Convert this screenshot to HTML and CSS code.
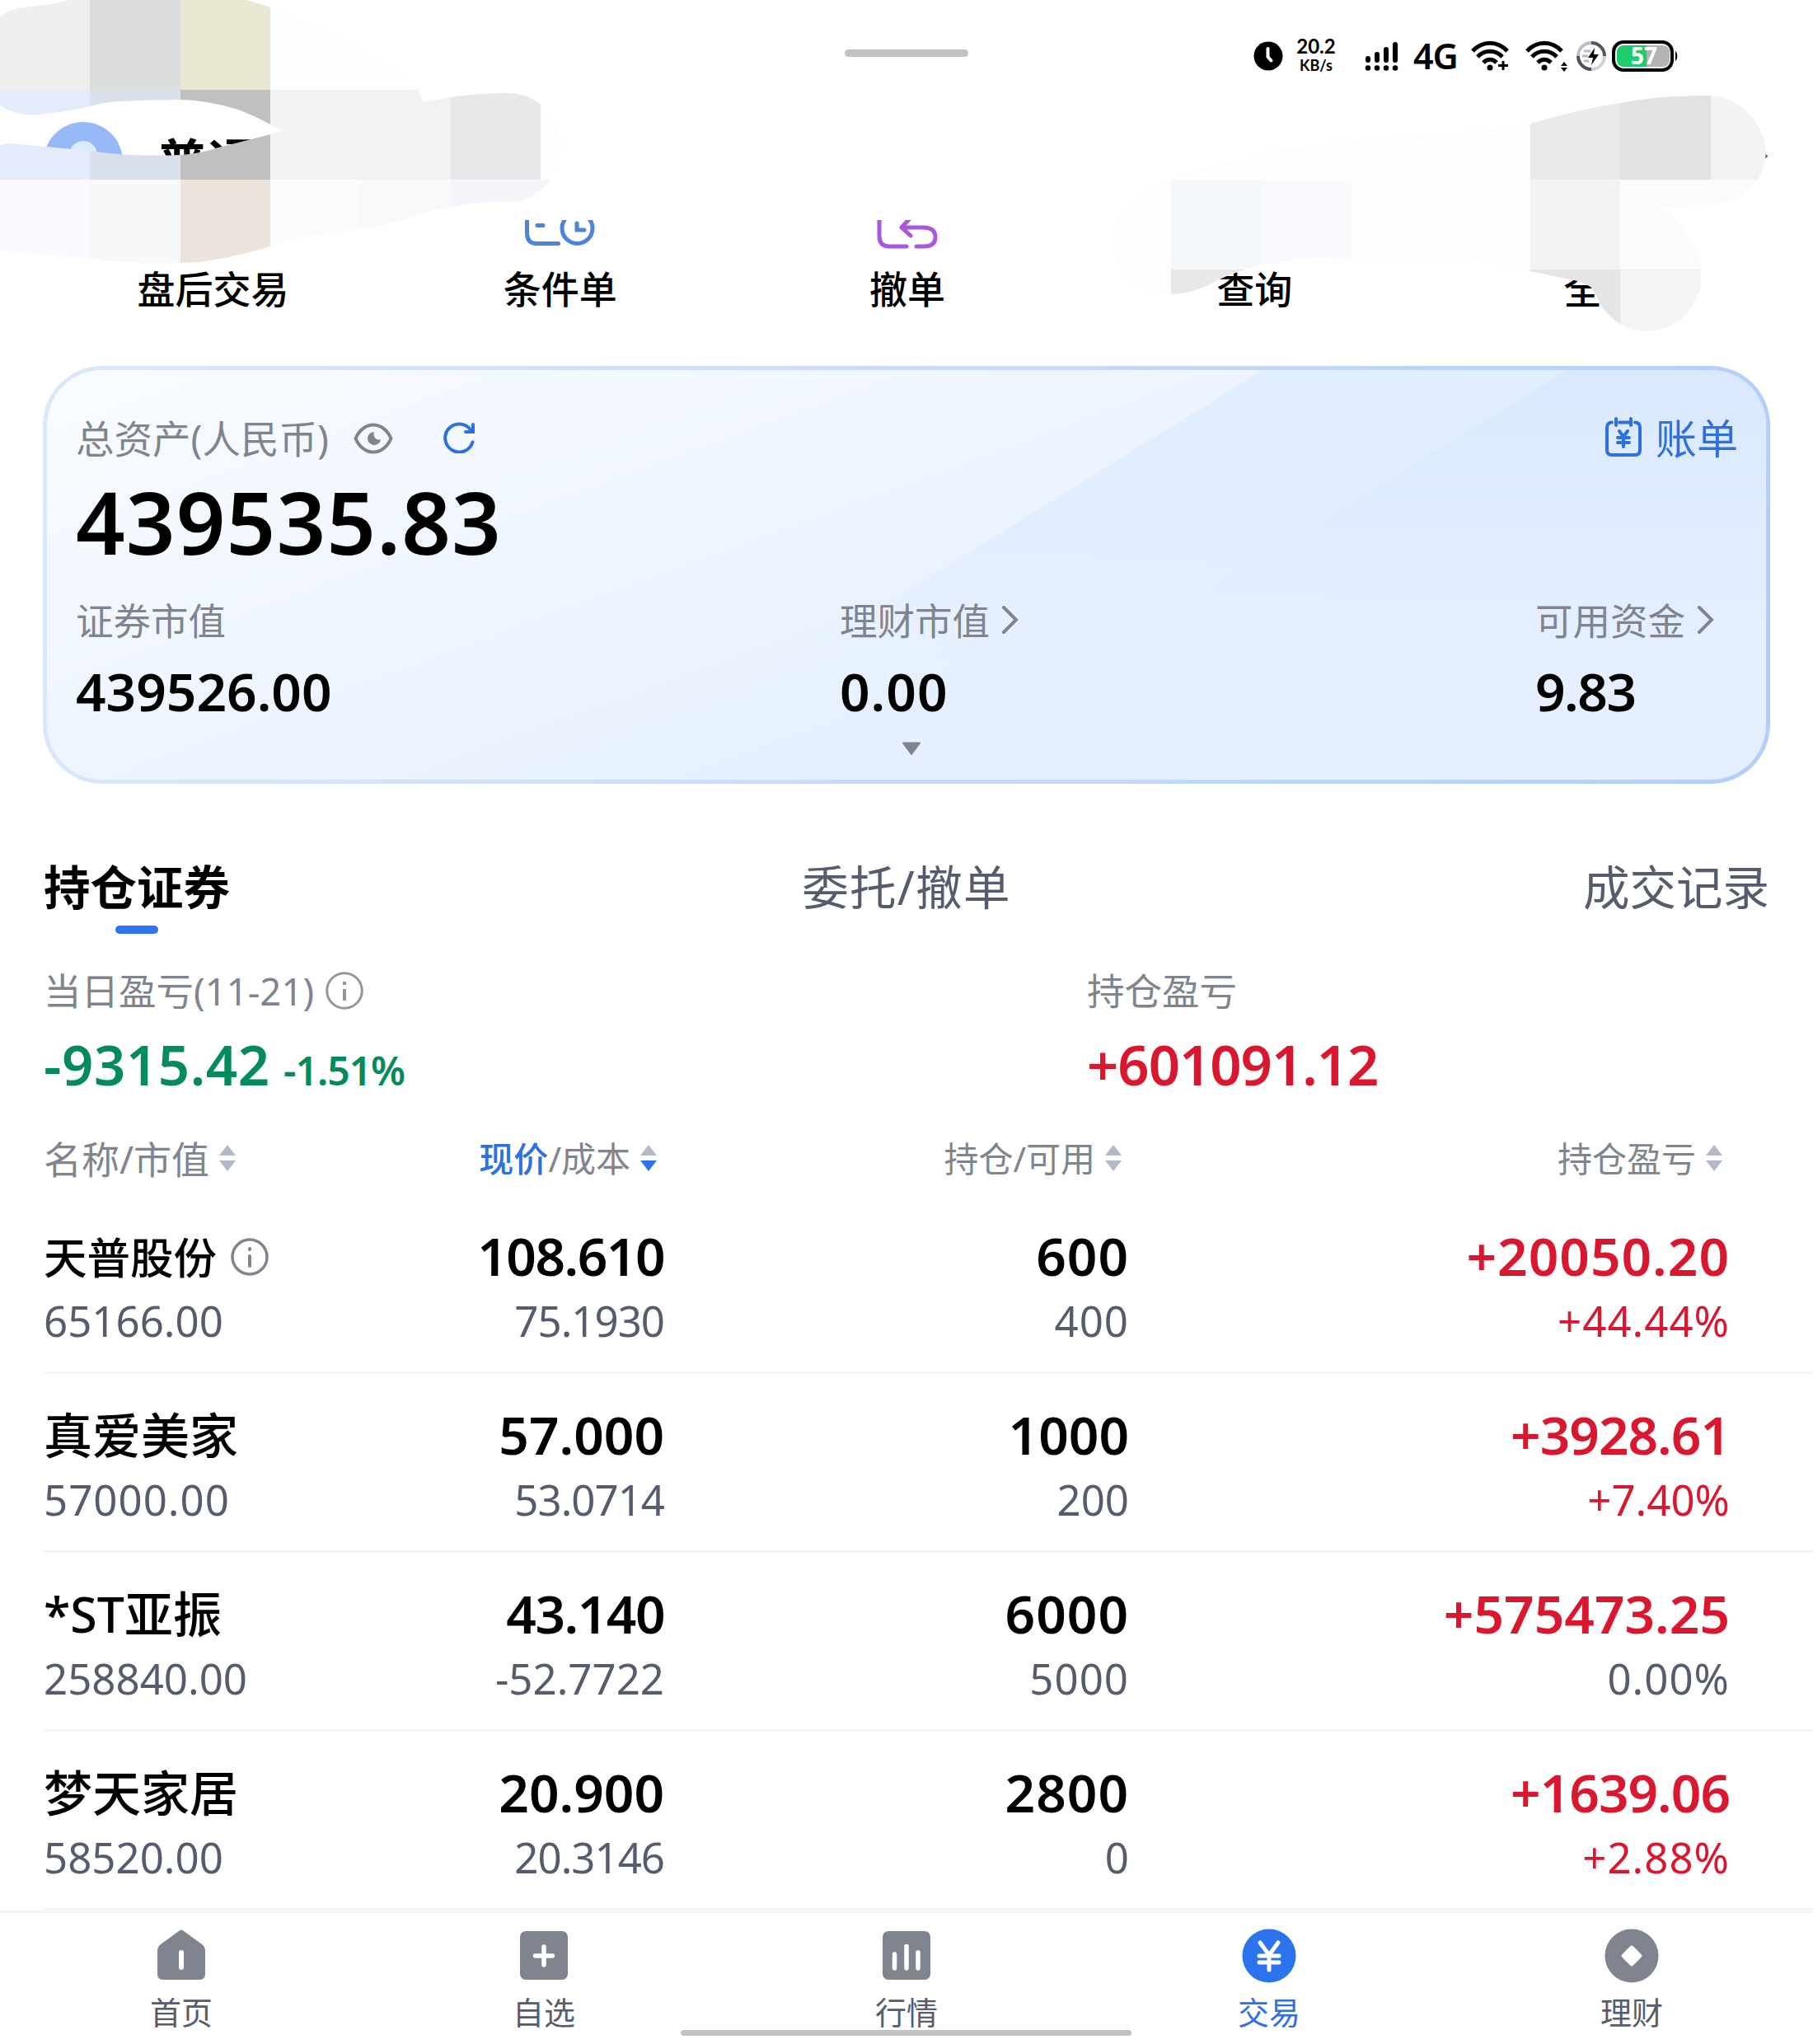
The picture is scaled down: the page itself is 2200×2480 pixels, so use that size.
FILE: index.html
```html
<!DOCTYPE html>
<html lang="zh-CN">
<head>
    <meta charset="UTF-8">
    <title>交易</title>
    <link rel="stylesheet" href="styles.css">
</head>
<body>

<div class="screen">
    <div class="status">
        <svg class="status-clock" width="36" height="36" viewBox="0 0 36 36"><circle cx="18" cy="18" r="17.5"/><path d="M17.5 9v10l4 4.5" fill="none" stroke="#fff" stroke-width="4" stroke-linecap="round" stroke-linejoin="round"/></svg>
        <div class="speed"><span>20.2</span><span class="unit">KB/s</span></div>
        <svg class="status-signal" width="42" height="36" viewBox="0 0 42 36">
            <path d="M4 21v2M15 16v7M26 10v13M37 4v19" stroke="#000" stroke-width="6" stroke-linecap="round"/>
            <path d="M4 32.500h.01M15 32.500h.01M26 32.500h.01M37 32.500h.01" stroke="#000" stroke-width="6.500" stroke-linecap="round"/>
        </svg>
        <span class="net">4G</span>
        <svg class="status-wifi" width="48" height="38" viewBox="0 0 48 38">
            <path d="M3 13c12-13 30-13 42 0M9 20c8-9 22-9 30 0M16 27c5-5 11-5 16 0" fill="none" stroke="#000" stroke-width="5"/>
            <circle cx="24" cy="33" r="3.500"/><path d="M34 30.500h12M40 25v11" stroke="#000" stroke-width="3"/>
        </svg>
        <svg class="status-wifi2" width="52" height="38" viewBox="0 0 52 38">
            <path d="M3 13c12-13 30-13 42 0M9 20c8-9 22-9 30 0M16 27c5-5 11-5 16 0" fill="none" stroke="#000" stroke-width="5"/>
            <circle cx="24" cy="33" r="3.500"/><path d="M44 31l4-5 4 5zM44 33l4 5 4-5z"/>
        </svg>
        <svg class="status-charge" width="38" height="38" viewBox="0 0 38 38">
            <path d="M19 3a16 16 0 0 0-16 16" fill="none" stroke="#b9bdc8" stroke-width="4"/>
            <path d="M3 19a16 16 0 0 0 16 16" fill="none" stroke="#4a5060" stroke-width="4"/>
            <path d="M19 35a16 16 0 0 0 16-16" fill="none" stroke="#d2d2d4" stroke-width="4"/>
            <path d="M35 19A16 16 0 0 0 19 3" fill="none" stroke="#555" stroke-width="4"/>
            <path d="M10 13h8M8 19h7M10 25h6" stroke="#bbb" stroke-width="3"/>
            <path d="M23 9l-8 12h6l-2 9 9-13h-6z"/>
        </svg>
        <svg class="status-battery" width="80" height="38" viewBox="0 0 80 38">
            <rect x="2" y="2" width="71" height="34" rx="12" fill="#fff" stroke="#000" stroke-width="4"/>
            <path d="M42 6h20a8 8 0 0 1 8 8v10a8 8 0 0 1-8 8H42z" fill="#b3b3b3"/>
            <path d="M42 6H14a8 8 0 0 0-8 8v10a8 8 0 0 0 8 8h28z" fill="#20cb6b"/>
            <path d="M77 13c3 2 3 10 0 12z"/>
            <text x="39" y="29" text-anchor="middle" class="battery-text">57</text>
        </svg>
    </div>
    <div class="handle"></div>

    <div class="account">
        <svg width="96" height="96" viewBox="0 0 96 96"><circle cx="48" cy="48" r="48" fill="#98b9f7"/><circle cx="48" cy="40" r="17" fill="#dce9fe"/></svg>
        <span>普通</span>
        <svg class="account-arrow" width="40" height="24" viewBox="0 0 40 24"><path d="M4 4l16 15L36 4" fill="none" stroke="#565c6e" stroke-width="4"/></svg>
    </div>

    <div class="actions">
        <div class="action"><div class="action-icon"></div>盘后交易</div>
        <div class="action">
            <div class="action-icon">
                <svg width="90" height="35" viewBox="0 0 90 35" fill="none" stroke="#4c84da" stroke-width="5" stroke-linecap="round">
                    <path d="M4.500-5v21q0 12.500 12 12.500h26M17 6.500h7M65 4v8h9"/><circle cx="65.500" cy="10" r="18.500"/>
                </svg>
            </div>条件单
        </div>
        <div class="action">
            <div class="action-icon">
                <svg width="90" height="35" viewBox="0 0 90 35" fill="none" stroke="#a958dc" stroke-width="5" stroke-linecap="round" stroke-linejoin="round">
                    <path d="M11-5v24q0 13 12 13h21M49-3L38 9l11 10M38 9h26q15 0 15 11.500T65 32H56"/>
                </svg>
            </div>撤单
        </div>
        <div class="action"><div class="action-icon"></div>查询</div>
        <div class="action"><div class="action-icon"></div>全部</div>
    </div>

    <div class="card">
        <svg class="card-shine" width="2086" height="497" viewBox="0 0 2086 497" preserveAspectRatio="none">
            <defs>
                <linearGradient id="shine1" x1="0" y1="0" x2="0" y2="1"><stop offset="0" stop-color="#e1eeff"/><stop offset=".5" stop-color="#e1eeff"/><stop offset="1" stop-color="#e4eeff" stop-opacity="0"/></linearGradient>
                <linearGradient id="shine2" x1="0" y1="0" x2="0" y2="1"><stop offset="0" stop-color="#d9e8ff"/><stop offset="1" stop-color="#e3eeff" stop-opacity="0"/></linearGradient>
            </defs>
            <path d="M1475 0L860 382H2086V0z" fill="url(#shine1)"/>
            <path d="M1846 0L1250 362H2086V0z" fill="url(#shine2)"/>
        </svg>
        <div class="card-top">
            <span class="card-title">总资产(人民币)</span>
            <svg class="eye" width="48" height="38" viewBox="0 0 48 38"><path d="M2.500 19C12-3 36-3 45.500 19 36 41 12 41 2.500 19z" fill="none" stroke="#80848f" stroke-width="4"/><path d="M25 11a8 8 0 1 0 8 9c-5 2-10-3-8-9z" fill="#80848f"/></svg>
            <svg width="38" height="38" viewBox="0 0 38 38" fill="none" stroke="#2f70e0" stroke-width="4" stroke-linecap="round"><path d="M35.500 24.500A17 17 0 1 1 33 9.500M36 3v9h-9"/></svg>
            <a class="bill">
                <svg width="46" height="50" viewBox="0 0 46 50" fill="none" stroke="#2f70e0" stroke-width="4" stroke-linecap="round"><path d="M18 7.500h12M9 7.500h0Q3 7.500 3 14v27q0 6 6 6h28q6 0 6-6V14q0-6.500-6-6.500M14 3v8M32 3v8M18 18l5 7 5-7M16 26h14M16 32h14M23 25v12"/></svg>
                <span>账单</span>
            </a>
        </div>
        <div class="total">439535.83</div>
        <div class="card-cols">
            <div>
                <div class="card-label">证券市值</div>
                <div class="card-value">439526.00</div>
            </div>
            <div>
                <div class="card-label">理财市值<svg width="22" height="38" viewBox="0 0 22 38"><path d="M3 4l15 15L3 34"/></svg></div>
                <div class="card-value wide">0.00</div>
            </div>
            <div>
                <div class="card-label">可用资金<svg width="22" height="38" viewBox="0 0 22 38"><path d="M3 4l15 15L3 34"/></svg></div>
                <div class="card-value ones">9.83</div>
            </div>
        </div>
        <svg class="expand" width="24" height="17" viewBox="0 0 24 17"><path d="M2 1.500h20L12 15z" fill="#80848f" stroke="#80848f" stroke-width="2" stroke-linejoin="round"/></svg>
    </div>

    <div class="tabs">
        <div class="tab active">持仓证券</div>
        <div class="tab orders">委托/撤单</div>
        <div class="tab">成交记录</div>
    </div>

    <div class="profit">
        <div>
            <div class="profit-label">当日盈亏(11-21)<svg width="46" height="46" viewBox="0 0 46 46"><circle cx="23" cy="23" r="21.300" fill="none" stroke="#949698" stroke-width="3"/><path d="M23 12v4M23 21v14" stroke="#949698" stroke-width="4"/></svg></div>
            <div class="profit-value green"><span class="day">-9315.42</span> <small>-1.51%</small></div>
        </div>
        <div>
            <div class="profit-label">持仓盈亏</div>
            <div class="profit-value red">+601091.12</div>
        </div>
    </div>

    <div class="row head">
        <div class="first">名称/市值<svg class="sort" width="22" height="34" viewBox="0 0 22 34"><path d="M11 1l10 13H1z"/><path d="M11 33L1 20h20z"/></svg></div>
        <div><b>现价</b>/成本<svg class="sort" width="22" height="34" viewBox="0 0 22 34"><path d="M11 1l10 13H1z"/><path class="on" d="M11 33L1 20h20z"/></svg></div>
        <div>持仓/可用<svg class="sort" width="22" height="34" viewBox="0 0 22 34"><path d="M11 1l10 13H1z"/><path d="M11 33L1 20h20z"/></svg></div>
        <div>持仓盈亏<svg class="sort" width="22" height="34" viewBox="0 0 22 34"><path d="M11 1l10 13H1z"/><path d="M11 33L1 20h20z"/></svg></div>
    </div>

    <div class="row">
        <div class="name"><p class="small-name">天普股份<svg width="46" height="46" viewBox="0 0 46 46"><circle cx="23" cy="23" r="21" fill="none" stroke="#80848f" stroke-width="3.500"/><path d="M23 13v1M23 22v12" stroke="#80848f" stroke-width="4" stroke-linecap="round"/></svg></p><p class="sub">65166.00</p></div>
        <div><p class="num ones">108.610</p><p class="sub tight">75.1930</p></div>
        <div><p class="num wide">600</p><p class="sub wide">400</p></div>
        <div class="red"><p class="num wide">+20050.20</p><p class="sub wide">+44.44%</p></div>
    </div>
    <div class="row">
        <div class="name"><p>真爱美家</p><p class="sub wide">57000.00</p></div>
        <div><p class="num">57.000</p><p class="sub tight">53.0714</p></div>
        <div><p class="num">1000</p><p class="sub">200</p></div>
        <div class="red"><p class="num tight">+3928.61</p><p class="sub">+7.40%</p></div>
    </div>
    <div class="row">
        <div class="name"><p>*ST亚振</p><p class="sub">258840.00</p></div>
        <div><p class="num ones">43.140</p><p class="sub">-52.7722</p></div>
        <div><p class="num wide">6000</p><p class="sub wide">5000</p></div>
        <div class="red"><p class="num">+575473.25</p><p class="sub wide flat">0.00%</p></div>
    </div>
    <div class="row">
        <div class="name"><p>梦天家居</p><p class="sub">58520.00</p></div>
        <div><p class="num">20.900</p><p class="sub tight">20.3146</p></div>
        <div><p class="num wide">2800</p><p class="sub">0</p></div>
        <div class="red"><p class="num tight">+1639.06</p><p class="sub wide">+2.88%</p></div>
    </div>

    <div class="nav">
        <div class="nav-item">
            <svg width="66" height="66" viewBox="0 0 66 66"><path d="M30 3q3-3 6 0l22 16q4 3 4 8v28q0 7-7 7H11q-7 0-7-7V27q0-5 4-8z"/><path d="M33 29v18" stroke="#fff" stroke-width="6" stroke-linecap="round"/></svg>
            首页
        </div>
        <div class="nav-item">
            <svg width="66" height="66" viewBox="0 0 66 66"><rect x="4" y="3" width="58" height="59" rx="7"/><path d="M33 22v22M22.500 33h21" stroke="#fff" stroke-width="5.500" stroke-linecap="round"/></svg>
            自选
        </div>
        <div class="nav-item">
            <svg width="66" height="66" viewBox="0 0 66 66"><rect x="4" y="3" width="58" height="59" rx="7"/><path d="M18.500 31v17M33 21.500v26.500M47 29v19" stroke="#fff" stroke-width="5.500" stroke-linecap="round"/></svg>
            行情
        </div>
        <div class="nav-item current">
            <svg width="66" height="66" viewBox="0 0 66 66"><circle cx="33" cy="33" r="32.500"/><path d="M22 17l11 15 11-15M21 33h24M21 41h24M33 32v18" fill="none" stroke="#fff" stroke-width="5" stroke-linecap="round"/></svg>
            交易
        </div>
        <div class="nav-item">
            <svg width="66" height="66" viewBox="0 0 66 66"><circle cx="33" cy="33" r="32.500"/><path d="M33 22.500L43.500 33 33 43.500 22.500 33z" fill="#fff" stroke="#fff" stroke-width="4" stroke-linejoin="round"/></svg>
            理财
        </div>
    </div>
    <div class="home-bar"></div>

    <!-- pixelated smudges hiding the account details -->
    <svg class="mosaic" width="2200" height="410" viewBox="0 0 2200 410">
        <defs>
            <clipPath id="left"><path d="M0 20Q12 11 28 9Q55 7 84 0H298Q315 4 328 9Q362 22 391 37Q420 50 447 65Q472 78 489 88Q503 99 507 109L514 124Q530 121 547 118Q580 113 615 113Q640 113 656 127Q681 147 681 180Q680 201 668 218Q648 244 619 245Q590 245 568 247L547 252L512 258Q490 268 466 273Q420 281 372 287Q349 291 328 299Q295 309 261 315Q240 319 219 319Q190 320 163 319L109 314Q54 309 0 304V176Q6 174 14 174Q30 175 56 178L109 183Q135 187 158 188Q190 189 219 188Q245 186 261 180L289 173L328 163L344 159L328 151Q310 141 289 133Q270 127 251 124Q235 121 219 121Q180 121 144 123Q127 124 109 129Q80 136 56 138Q25 144 0 128Z"/></clipPath>
            <clipPath id="right"><path d="M1421 218Q1450 203 1526 190Q1538 181 1559 181L1691 167L1834 154L1857 150Q1885 142 1910 136Q1938 129 1966 125Q2010 116 2076 116Q2108 119 2130 147Q2146 171 2142 193Q2140 207 2133 218Q2110 249 2076 248L2014 251Q2033 265 2042 277Q2062 304 2064 327Q2065 350 2058 363Q2042 398 1998 402Q1978 402 1966 393Q1951 384 1941 368Q1937 356 1930 348Q1920 342 1910 340L1857 329Q1810 319 1779 314L1587 313Q1551 319 1526 323Q1498 330 1477 340Q1450 356 1421 357Q1390 356 1373 340Q1352 320 1352 293Q1353 238 1421 218Z"/></clipPath>
        </defs>
        <g clip-path="url(#left)">
            <path fill="#efefef" d="M0 0h109v109H0z"/>
            <path fill="#dcdedd" d="M109 0h110v109H109z"/>
            <path fill="#eae7d3" d="M219 0h109v109H219z"/>
            <path fill="#fcfefd" d="M328 0h109v109H328z"/>
            <path fill="#fdfdfd" d="M437 0h110v109H437z"/>
            <path fill="#e4ebfb" d="M0 109h109v109H0z"/>
            <path fill="#d9e0eb" d="M109 109h110v109H109z"/>
            <path fill="#c0c0c0" d="M219 109h109v109H219z"/>
            <path fill="#f2f2f2" d="M328 109h219v109H328z"/>
            <path fill="#e8e8ea" d="M547 109h109v109H547z"/>
            <path fill="#fdfdfb" d="M656 109h109v109H656z"/>
            <path fill="#f8faff" d="M0 218h109v109H0z"/>
            <path fill="#f6f8f9" d="M109 218h110v109H109z"/>
            <path fill="#ece3dd" d="M219 218h109v109H219z"/>
            <path fill="#fbfbfb" d="M328 218h109v109H328z"/>
            <path fill="#f9f9f9" d="M437 218h110v109H437z"/>
            <path fill="#f3f5fa" d="M547 218h218v109H547z"/>
        </g>
        <g clip-path="url(#right)">
            <path fill="#fdfdfd" d="M1311 109h546v293h-546z"/>
            <path fill="#eaeaea" d="M1857 109h109v109h-109z"/>
            <path fill="#e2e2e2" d="M1966 109h110v109h-110z"/>
            <path fill="#f3f3f3" d="M2076 109h109v109h-109z"/>
            <path fill="#f4f8fb" d="M1421 218h109v109h-109z"/>
            <path fill="#f8fafe" d="M1530 218h109v109h-109z"/>
            <path fill="#f3f3f3" d="M1857 218h109v109h-109z"/>
            <path fill="#fbfbfb" d="M1966 218h219v109h-219z"/>
            <path fill="#e8e8e8" d="M1421 327h109v80h-109z"/>
            <path fill="#e5e5e5" d="M1857 327h109v80h-109z"/>
            <path fill="#f4f4f4" d="M1966 327h110v80h-110z"/>
        </g>
    </svg>
</div>

</body>
</html>
```
FILE: styles.css
```css
body {
    margin: 0;
    background: #fff;
    color: #000;
    font-family: "Noto Sans", "Noto Sans CJK SC", sans-serif;
}
p {
    margin: 0;
}
svg {
    flex: none;
}
.screen {
    position: relative;
    width: 2200px;
    height: 2480px;
    overflow: hidden;
}
.status {
    display: flex;
    align-items: center;
    box-sizing: border-box;
    height: 136px;
    padding-left: 1521px;
}
.speed {
    display: flex;
    flex-direction: column;
    align-items: center;
    width: 54px;
    margin: -2px 0 0 13px;
    font-family: Lato, sans-serif;
    font-size: 24px;
    font-weight: 700;
    line-height: 25px;
}
.speed .unit {
    font-size: 18px;
    line-height: 23px;
}
.status-signal {
    margin-left: 32px;
}
.net {
    width: 56px;
    margin-left: 17px;
    font-size: 43px;
    font-weight: 600;
    line-height: 44px;
    letter-spacing: -1px;
}
.status-wifi {
    margin-left: 13px;
}
.status-wifi2 {
    margin-left: 18px;
}
.status-charge {
    margin-left: 10px;
}
.status-battery {
    margin-left: 6px;
}
.battery-text {
    fill: #fff;
    font-size: 28px;
    font-weight: 700;
}
.handle {
    position: absolute;
    left: 1025px;
    top: 60px;
    width: 150px;
    height: 9px;
    border-radius: 5px;
    background: #c2c2c2;
}
.account {
    display: flex;
    align-items: center;
    height: 120px;
    margin-bottom: 2px;
    padding: 0 52px 0 53px;
    font-size: 62px;
    font-weight: 600;
    line-height: 80px;
}
.account span {
    margin: 1px 0 0 41px;
}
.account-arrow {
    margin-left: auto;
}
.actions {
    display: flex;
    padding: 9px 46px 0 48px;
}
.action {
    display: flex;
    flex: 1;
    flex-direction: column;
    align-items: center;
    height: 113px;
    font-size: 46px;
    font-weight: 500;
    line-height: 60px;
}
.action-icon {
    flex: none;
    height: 35px;
    margin-bottom: 18px;
    line-height: 0;
    overflow: hidden;
}
.card {
    position: relative;
    box-sizing: border-box;
    height: 507px;
    margin: 64px 52px 0;
    padding: 55px 36px 0 35px;
    border: 5px solid transparent;
    border-radius: 72px;
    background:
        linear-gradient(160deg, #f9fcff 0%, #edf4ff 45%, #e6f0ff 62%, #e5eeff 100%) padding-box,
        linear-gradient(100deg, #dbe8fb, #c5d9f5 60%, #b0cffb) border-box;
}
.card-shine {
    position: absolute;
    left: 0;
    top: 0;
    border-radius: 67px;
}
.card-top, .total, .card-cols, .expand {
    position: relative;
}
.card-top {
    display: flex;
    align-items: center;
    height: 60px;
    color: #80848f;
    font-size: 46.500px;
    line-height: 60px;
}
.card-title {
    margin-top: -5px;
}
.card-top .eye {
    margin: -5px 61px 0 30px;
}
.card-top > svg {
    margin-top: -6px;
}
.bill {
    display: flex;
    align-items: center;
    gap: 16px;
    margin-left: auto;
    color: #2f70e0;
    font-size: 50px;
}
.bill span {
    margin: -5px -2px 0 0;
}
.bill svg {
    margin-top: -8px;
}
.total {
    margin-top: 17px;
    font-size: 104.500px;
    font-weight: 600;
    line-height: 104px;
    letter-spacing: 1.100px;
}
.card-cols {
    display: grid;
    grid-template-columns: 927px 844px 1fr;
    margin-top: 43px;
}
.card-label {
    display: flex;
    align-items: center;
    height: 50px;
    color: #80848f;
    font-size: 45.500px;
    line-height: 50px;
}
.card-label svg {
    margin: -2px 0 0 14px;
    fill: none;
    stroke: #80848f;
    stroke-width: 4px;
    stroke-linecap: round;
}
.card-value {
    margin-top: 21px;
    font-size: 64px;
    font-weight: 600;
    line-height: 80px;
}
.expand {
    display: block;
    margin: 21px 0 0 1002px;
}
.wide {
    letter-spacing: 1px;
}
.tight {
    letter-spacing: -1px;
}
.ones {
    letter-spacing: -1.500px;
}
.tabs {
    display: flex;
    justify-content: space-between;
    height: 91px;
    margin-top: 91px;
    padding: 0 53px;
    color: #565c6e;
    font-size: 56.500px;
    line-height: 70px;
}
.tab.active {
    color: #000;
    font-weight: 600;
}
.tab.active::after {
    content: "";
    display: block;
    width: 52px;
    height: 10px;
    margin: 11px auto 0;
    border-radius: 5px;
    background: #2f74ee;
}
.tab.orders {
    letter-spacing: 1.300px;
}
.profit {
    display: grid;
    grid-template-columns: 1266px 1fr;
    margin-top: 44px;
    padding-left: 53px;
}
.profit-label {
    display: flex;
    align-items: center;
    height: 50px;
    color: #80848f;
    font-size: 45.500px;
    line-height: 50px;
}
.profit-label svg {
    margin: 0 0 0 14px;
}
.profit-value {
    height: 80px;
    margin-top: 24px;
    font-size: 67px;
    font-weight: 600;
    line-height: 80px;
    white-space: nowrap;
    letter-spacing: -1px;
}
.profit-value .day {
    letter-spacing: .600px;
}
.profit-value small {
    font-size: 48px;
    letter-spacing: -1px;
}
.green {
    color: #058b5b;
}
.red {
    color: #d9182f;
}
.row {
    display: grid;
    grid-template-columns: 451px 302px 564px 729px;
    box-sizing: border-box;
    height: 217px;
    margin-left: 52px;
    padding: 37px 0 0 1px;
    border-bottom: 3px solid #f3f5fa;
    text-align: right;
}
.head {
    height: 50px;
    margin-top: 50px;
    margin-bottom: 19px;
    padding-top: 0;
    border: 0;
    color: #80848f;
    font-size: 42px;
    line-height: 50px;
}
.head > div {
    display: flex;
    align-items: center;
    justify-content: flex-end;
    padding-right: 8px;
}
.head .first {
    justify-content: flex-start;
    font-size: 46px;
}
.head b {
    color: #2f70e0;
    font-weight: 500;
}
.sort {
    margin: -2px 0 0 11px;
    fill: #b3b9c6;
}
.sort .on {
    fill: #2f74ee;
}
.name {
    text-align: left;
    font-size: 59px;
    font-weight: 500;
    line-height: 75px;
}
.name p:first-child {
    height: 76px;
}
.small-name {
    display: flex;
    align-items: center;
    font-size: 52.500px;
}
.small-name svg {
    margin-left: 17px;
}
.num {
    height: 76px;
    font-size: 64px;
    font-weight: 600;
    line-height: 74px;
}
.sub {
    margin-top: 9px;
    color: #565c6e;
    font-size: 51px;
    font-weight: 400;
    line-height: 60px;
}
.red .sub {
    color: #d9182f;
}
.red .flat {
    color: #565c6e;
}
.nav {
    display: flex;
    box-sizing: border-box;
    height: 162px;
    padding-top: 19px;
    border-top: 3px solid #f3f5fa;
}
.nav-item {
    display: flex;
    flex: 1;
    flex-direction: column;
    align-items: center;
    gap: 12px;
    color: #565c6e;
    font-size: 38px;
    line-height: 46px;
}
.nav-item svg {
    fill: #80848f;
}
.nav-item.current {
    color: #2f70e0;
}
.nav-item.current svg {
    fill: #2b74ee;
}
.home-bar {
    position: absolute;
    left: 826px;
    top: 2463px;
    width: 547px;
    height: 7px;
    border-radius: 4px;
    background: #c2c2c2;
}
.mosaic {
    position: absolute;
    left: 0;
    top: 0;
}
```
